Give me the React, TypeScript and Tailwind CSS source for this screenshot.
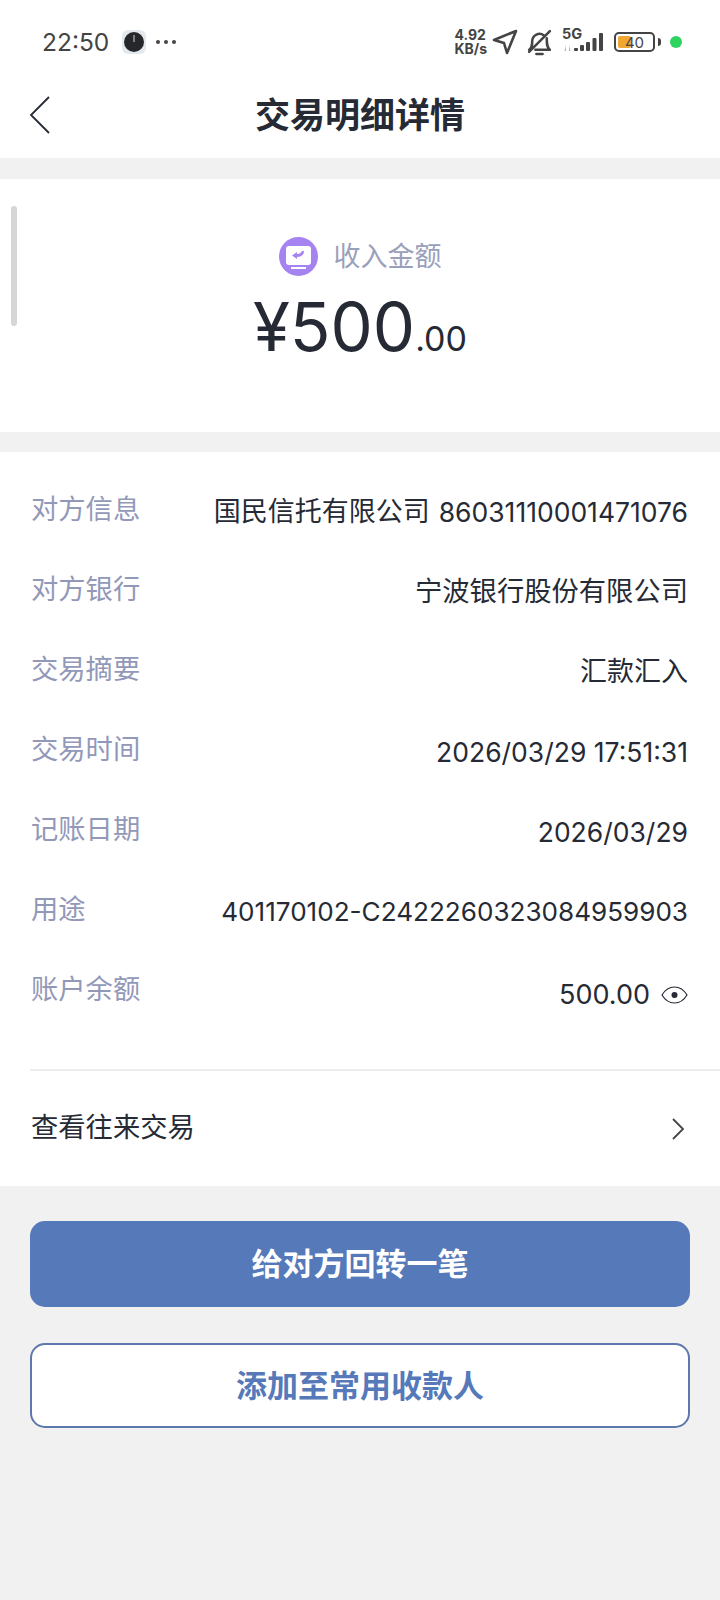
const font = { fontFamily: '"Inter", "Noto Sans CJK SC", sans-serif' }

const rows = [
  { label: '对方银行', value: '宁波银行股份有限公司', size: 'text-[27.300px]' },
  { label: '交易摘要', value: '汇款汇入', size: 'text-[27px]' },
  { label: '交易时间', value: '2026/03/29 17:51:31', size: 'text-[26.500px]' },
  { label: '记账日期', value: '2026/03/29', size: 'text-[26.500px]' },
  { label: '用途', value: '401170102-C2422260323084959903', size: 'text-[26.100px]' },
]

function StatusBar() {
  return (
    <div className="flex h-[84px] items-center justify-between pl-[42px] pr-[38px] text-[#444444]">
      <div className="flex items-center">
        <span className="text-[24.500px] leading-none">22:50</span>
        <svg className="ml-[13px]" width="24" height="24" viewBox="0 0 24 24">
          <rect width="24" height="24" rx="6" fill="#e3e9ee" />
          <circle cx="12" cy="12" r="10" fill="#26272b" />
          <path d="M12 5v7" stroke="#d8d8d8" strokeWidth="1" />
        </svg>
        <div className="ml-[10px] flex gap-[4px]">
          <span className="h-[4px] w-[4px] rounded-full bg-[#444444]" />
          <span className="h-[4px] w-[4px] rounded-full bg-[#444444]" />
          <span className="h-[4px] w-[4px] rounded-full bg-[#444444]" />
        </div>
      </div>
      <div className="flex items-center">
        <div className="flex flex-col text-[14px] font-bold leading-[14px]">
          <span>4.92</span>
          <span>KB/s</span>
        </div>
        <svg className="ml-[5px]" width="26" height="26" viewBox="0 0 26 26" fill="none" stroke="#444444" strokeWidth="2.6" strokeLinejoin="round">
          <path d="M24 2 2 11l10 3 3 10z" />
        </svg>
        <svg className="ml-[8px]" width="27" height="27" viewBox="0 0 26 26" fill="none" stroke="#444444" strokeWidth="2.4" strokeLinecap="round" strokeLinejoin="round">
          <path d="M3 20c3-2 3-5 3-9a7 7 0 0 1 11-5M20 9c0 5 0 9 3 11H9M10 24h6M3 22 23 2" />
        </svg>
        <div className="relative ml-[9px] h-[26px] w-[42px]">
          <span className="absolute left-0 top-[-2px] text-[14.500px] font-bold leading-none">5G</span>
          <svg className="absolute left-0 top-0" width="42" height="26" viewBox="0 0 42 26" fill="#444444">
            <path d="M4 16v6H2.500zM7 22v-6l1.500 6z" fill="#b5b5b5" />
            <rect x="12" y="19" width="4" height="3" rx="1" />
            <rect x="18" y="16" width="4" height="6" rx="1" />
            <rect x="24" y="13" width="4" height="9" rx="1" />
            <rect x="30.500" y="9" width="4" height="13" rx="1" />
            <rect x="37" y="4" width="4" height="18" rx="1" />
          </svg>
        </div>
        <div className="relative ml-[10px] flex h-[20px] w-[41px] items-center justify-center rounded-[5px] border-2 border-[#444444]">
          <div className="absolute left-[2px] top-[2px] h-[12px] w-[13px] rounded-[2px] bg-[#f0a732]" />
          <span className="relative text-[15px] leading-none">40</span>
        </div>
        <div className="ml-[3px] h-[8px] w-[3px] rounded-r-sm bg-[#444444]" />
        <div className="ml-[9px] h-[12px] w-[12px] rounded-full bg-[#2fd35f]" />
      </div>
    </div>
  )
}

export default function App() {
  return (
    <div className="flex min-h-[1600px] flex-col bg-[#f1f1f1] text-[#262a35]" style={font}>
      <div className="bg-white">
        <StatusBar />
        <div className="relative flex h-[74px] items-start justify-center">
          <svg className="absolute left-[29px] top-[12px]" width="22" height="38" viewBox="0 0 22 38" fill="none" stroke="#262a35" strokeWidth="1.8">
            <path d="M20 1 2 19l18 18" />
          </svg>
          <h1 className="text-[35px] font-bold leading-[62px]">交易明细详情</h1>
        </div>
      </div>

      <div className="relative mt-[21px] flex h-[253px] flex-col items-center bg-white">
        <div className="absolute left-[11px] top-[27px] h-[120px] w-[6px] rounded-sm bg-[#d6d6d6]" />
        <div className="mt-[58px] flex items-center">
          <svg width="39" height="39" viewBox="0 0 39 39">
            <circle cx="19.500" cy="19.500" r="19.500" fill="#a583f0" />
            <rect x="7" y="9" width="25" height="19" rx="3" fill="white" />
            <path d="M25 14c0 4-3 6-7 6v2l-5-3.500 5-3.500v2c3 0 4-1 5-3z" fill="#a583f0" />
            <rect x="12" y="30" width="15" height="2" fill="white" />
          </svg>
          <span className="ml-[16px] text-[27px] leading-none text-[#9aa0bb]">收入金额</span>
        </div>
        <div className="mt-[17px] flex items-baseline leading-none">
          <span className="text-[67px]">¥500</span>
          <span className="text-[34px]">.00</span>
        </div>
      </div>

      <div className="mt-[20px] bg-white">
        <div className="flex flex-col pl-[31px] pr-[32px] pt-[30px]">
          <div className="flex h-[80px] items-start justify-between">
            <span className="text-[27.300px] leading-[56px] text-[#9298b8]">对方信息</span>
            <span className="mt-[2px] flex leading-[56px]">
              <span className="text-[27px]">国民信托有限公司</span>
              <span className="ml-[9px] text-[26.500px]">86031110001471076</span>
            </span>
          </div>
          {rows.map((row) => (
            <div key={row.label} className="flex h-[80px] items-start justify-between">
              <span className="text-[27.300px] leading-[56px] text-[#9298b8]">{row.label}</span>
              <span className={`mt-[2px] leading-[56px] ${row.size}`}>{row.value}</span>
            </div>
          ))}
          <div className="flex h-[107px] items-start justify-between">
            <span className="text-[27.300px] leading-[56px] text-[#9298b8]">账户余额</span>
            <div className="mt-[5px] flex items-center">
              <span className="text-[27px] leading-[56px]">500.00</span>
              <svg className="ml-[11px]" width="27" height="20" viewBox="0 0 27 20" fill="none" stroke="#262a35" strokeWidth="1.200">
                <path d="M1 10c3-5 7-8 12.500-8S23 5 26 10c-3 5-7 8-12.500 8S4 15 1 10z" />
                <circle cx="13.500" cy="10" r="3" fill="#262a35" stroke="none" />
              </svg>
            </div>
          </div>
        </div>
        <div className="ml-[30px] h-[2px] bg-[#ececec]" />
        <div className="flex h-[115px] items-center justify-between pl-[31px] pr-[35px]">
          <span className="text-[27.300px]">查看往来交易</span>
          <svg width="13" height="22" viewBox="0 0 13 22" fill="none" stroke="#444444" strokeWidth="1.800">
            <path d="M1 1l10 10L1 21" />
          </svg>
        </div>
      </div>

      <div className="flex flex-col gap-[36px] px-[30px] pt-[35px]">
        <button className="flex h-[86px] items-center justify-center rounded-[15px] bg-[#5679b9] text-[31px] font-bold text-white">
          给对方回转一笔
        </button>
        <button className="flex h-[85px] items-center justify-center rounded-[15px] border-2 border-[#5d78ad] bg-white pt-[2px] text-[31px] font-bold text-[#5679b9]">
          添加至常用收款人
        </button>
      </div>
    </div>
  )
}
